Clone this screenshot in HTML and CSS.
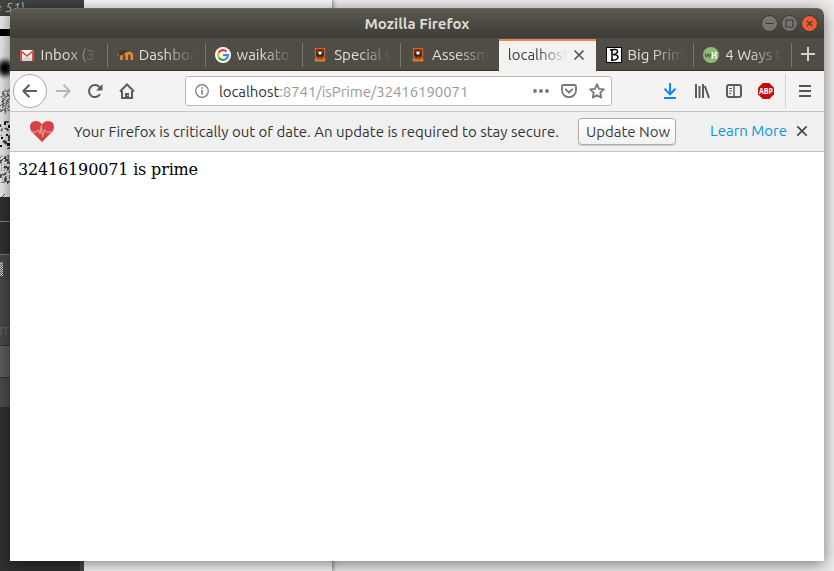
FILE: index.html
```html
<!DOCTYPE html>
<html lang="en">
<head>
<meta charset="utf-8">
<title>Mozilla Firefox</title>
<link rel="stylesheet" href="styles.css">
</head>
<body>
<div class="desktop">
  <div class="paper"></div>
  <div class="dark-app">
    <div class="dark-title">× 51)</div>
    <svg class="noise" width="10" height="181" viewBox="0 16 10 181">
      <defs>
        <filter id="soft" x="-1" y="-1" width="3" height="3"><feGaussianBlur stdDeviation="2.5"/></filter>
        <filter id="grain" x="0" y="0" width="1" height="1"><feTurbulence type="fractalNoise" baseFrequency=".42" numOctaves="1" seed="4"/><feColorMatrix values="0 0 0 0 .07 0 0 0 0 .07 0 0 0 0 .07 9 0 0 0 -4.3"/></filter>
        <filter id="spots" x="0" y="0" width="1" height="1"><feTurbulence type="fractalNoise" baseFrequency=".25" numOctaves="1" seed="7"/><feColorMatrix values="0 0 0 0 .05 0 0 0 0 .05 0 0 0 0 .05 12 0 0 0 -6.800"/></filter>
      </defs>
      <path d="M0 16h10v181H0z" fill="#e9e9e9"/>
      <path d="M0 29h10v7H0z" fill="#000"/>
      <ellipse cx="5" cy="68" rx="7" ry="8" filter="url(#soft)"/>
      <path d="M5 89v3M7 91l3-2M2 93l3 2M7 95l3 1M1 97l4-2M3 99l6-4M1 102l5-3M6 103l4-5M0 106l5-3M2 108l7-6M1 112l5-5M7 109l3-3M5 114l1-4" stroke="#444" stroke-width=".8"/>
      <rect x="0" y="91" width="10" height="21" filter="url(#grain)" opacity=".6"/>
      <rect x="0" y="121" width="10" height="28" filter="url(#spots)"/>
      <path d="M4 122h2v3H4zM8 125h2v3H8zM6 134h2v2H6zM1 137h2v2H1zM7 143h3v3H7zM0 145h2v2H0z" fill="#111"/>
      <rect x="0" y="155" width="10" height="29" filter="url(#grain)"/>
      <path d="M2 197l3-3" stroke="#555"/>
    </svg>
    <div class="panel panel-a"></div>
    <div class="panel panel-b"></div>
    <div class="panel panel-c"><i class="checker"></i><span>rn</span></div>
    <div class="panel panel-d"></div>
    <div class="panel panel-e"></div>
  </div>

  <main class="window">
    <header class="titlebar">
      <h1>Mozilla Firefox</h1>
      <div class="controls">
        <svg width="17" height="17" viewBox="0 0 17 17"><circle cx="8.5" cy="8.5" r="8" class="ctl"/><path d="M4.5 8.5h8" class="ctl-mark"/></svg>
        <svg width="17" height="17" viewBox="0 0 17 17"><circle cx="8.5" cy="8.5" r="8" class="ctl"/><path d="M5 5h7v7H5z" class="ctl-mark"/></svg>
        <svg width="17" height="17" viewBox="0 0 17 17"><circle cx="8.5" cy="8.5" r="8" class="ctl-close"/><path d="M5.8 5.8l5.4 5.4M11.2 5.8l-5.4 5.4" class="ctl-mark"/></svg>
      </div>
    </header>

    <nav class="tabs">
      <div class="tab">
        <svg width="16" height="16" viewBox="0 0 16 16"><path d="M1 3h14v11H1z" fill="#f2f2f2"/><path d="M1 14l5-5 2 2 2-2 5 5z" fill="#d5d5d5"/><path d="M1 14V3h1l6 5 6-5h1v11h-2V6L8 10 3 6v8z" fill="#dc4b40"/></svg>
        <span class="label">Inbox (3,</span>
      </div>
      <div class="tab">
        <svg width="16" height="16" viewBox="0 0 16 16"><path d="M4.500 13V9Q4.500 6 7 6T9.700 9V13M9.700 9Q9.700 6 12.200 6T14.900 9V13" fill="none" stroke="#f08a28" stroke-width="2.500"/><path d="M1 6l5-3 4 1-3 3-3 1.500z" fill="#3d3934"/><path d="M1 6v4" stroke="#a66635"/></svg>
        <span class="label">Dashboa</span>
      </div>
      <div class="tab">
        <svg width="16" height="16" viewBox="0 0 16 16"><circle cx="8" cy="8" r="8" fill="#fff"/><g fill="none" stroke-width="2.200"><path d="M11.600 4.600A5 5 0 0 0 3.600 5.700" stroke="#ea4335"/><path d="M3.600 5.700A5 5 0 0 0 3.700 10.500" stroke="#fbbc05"/><path d="M3.700 10.500A5 5 0 0 0 11.200 11.800" stroke="#34a853"/><path d="M11.200 11.800A5 5 0 0 0 13 8.200H8" stroke="#4285f4"/></g></svg>
        <span class="label">waikato</span>
      </div>
      <div class="tab">
        <svg width="16" height="16" viewBox="0 0 16 16"><path d="M3.500 1.700h9v7Q11.500 11 8 12 4.500 11 3.500 8.700z" fill="#3a1c10" stroke="#c9622d" stroke-width="1.500"/><path d="M5 3.500h2v2H5zM9 3.500h2v2H9zM7 9h2v2H7z" fill="#8d3c1f"/><path d="M6.500 4.500h3v3h-3z" fill="#f5efe8"/><path d="M2.500 10.500l3 2h5l3-2-.5 4H3z" fill="#d8862d"/><path d="M5 11.500h6" stroke="#d03b2a"/></svg>
        <span class="label">Special C</span>
      </div>
      <div class="tab">
        <svg width="16" height="16" viewBox="0 0 16 16"><path d="M3.500 1.700h9v7Q11.500 11 8 12 4.500 11 3.500 8.700z" fill="#3a1c10" stroke="#c9622d" stroke-width="1.500"/><path d="M5 3.500h2v2H5zM9 3.500h2v2H9zM7 9h2v2H7z" fill="#8d3c1f"/><path d="M6.500 4.500h3v3h-3z" fill="#f5efe8"/><path d="M2.500 10.500l3 2h5l3-2-.5 4H3z" fill="#d8862d"/><path d="M5 11.500h6" stroke="#d03b2a"/></svg>
        <span class="label">Assessm</span>
      </div>
      <div class="tab active">
        <span class="label">localhost</span>
        <svg width="12" height="12" viewBox="0 0 12 12"><path d="M1.500 1.500l9 9M10.500 1.500l-9 9" stroke="#555" stroke-width="1.700"/></svg>
      </div>
      <div class="tab">
        <svg width="16" height="16" viewBox="0 0 16 16"><path d="M.5.5h15v15H.5z" fill="#fff" stroke="#000"/><path d="M6 3v10.500M4 3q7-1.500 7.500 1T7 7.500q5 0 5 2.800T5 13.500" stroke="#000" stroke-width="1.500" fill="none"/></svg>
        <span class="label">Big Prim</span>
      </div>
      <div class="tab">
        <svg width="16" height="16" viewBox="0 0 16 16"><circle cx="8" cy="8" r="8" fill="#93b874"/><path d="M2 6.500l1.200 3.500L5 7l1.300 3L7.600 6.500" stroke="#4f6b40" stroke-width="1.300" fill="none"/><path d="M9.500 5.500v5.500M12.800 5.500v5.500M9 8.200h4M8.500 5.500h2M12 5.500h2M8.500 11h2M12 11h2" stroke="#fff" stroke-width="1.200"/></svg>
        <span class="label">4 Ways t</span>
      </div>
      <div class="new-tab"><svg width="14" height="14" viewBox="0 0 14 14"><path d="M7 0v14M0 7h14" stroke="#d5d2c9" stroke-width="2"/></svg></div>
    </nav>

    <div class="toolbar">
      <div class="back"><svg width="16" height="16" viewBox="0 0 16 16"><path d="M15 8H1.500M7.500 1.700L1.300 8l6.200 6.300" class="stroke"/></svg></div>
      <svg class="forward" width="16" height="16" viewBox="0 0 16 16"><path d="M1 8h13.500M8.500 1.700L14.700 8l-6.200 6.300" class="stroke pale"/></svg>
      <svg class="reload" width="16" height="16" viewBox="0 0 16 16"><path d="M13 11.300A6 6 0 1 1 12.800 4.500" class="stroke"/><path d="M15.500 1v6.500H9z" fill="#5c5c5a"/></svg>
      <svg class="home" width="16" height="16" viewBox="0 0 16 16"><path d="M1 8.500L8 1.500l7 7M3 8v7h10V8" class="stroke"/><path d="M6 15v-5h4v5" fill="#5c5c5a"/><path d="M8.300 12.500h1" stroke="#fff"/></svg>
      <div class="urlbar">
        <svg width="14" height="14" viewBox="0 0 14 14"><circle cx="7" cy="7" r="6.300" fill="none" stroke="#777" stroke-width="1.200"/><path d="M7 6v4.500M7 3.300v1.500" stroke="#777" stroke-width="1.600"/></svg>
        <span class="url"><b>localhost</b>:8741/isPrime/32416190071</span>
        <svg width="16" height="16" viewBox="0 0 16 16" fill="#777"><circle cx="2" cy="8" r="1.900"/><circle cx="8" cy="8" r="1.900"/><circle cx="14" cy="8" r="1.900"/></svg>
        <svg class="pocket" width="16" height="16" viewBox="0 0 16 16"><path d="M2.500 2h11q1.500 0 1.500 1.500V7.500a7 6.700 0 0 1-14 0V3.500Q1 2 2.500 2zM4.700 6.300L8 9.500l3.300-3.200" class="stroke grey" stroke-linecap="round" stroke-linejoin="round"/></svg>
        <svg class="star" width="16" height="16" viewBox="0 0 16 16"><path d="M8 1.300l2 4.500 4.900.5-3.600 3.400 1 4.900L8 12.200l-4.300 2.400 1-4.900L1.100 6.300 6 5.800z" class="stroke grey" stroke-linejoin="round"/></svg>
      </div>
      <div class="tools">
        <svg width="16" height="16" viewBox="0 0 16 16"><path d="M7 0v11M1.500 5.800L7 11.300l5.500-5.500M1 15h12" transform="translate(1 0)" fill="none" stroke="#0a84ff" stroke-width="2"/></svg>
        <svg width="16" height="16" viewBox="0 0 16 16"><path d="M2 1v14M5.500 3v12M9 1v14M10.800 3L15 14.800" class="stroke"/></svg>
        <svg width="16" height="16" viewBox="0 0 16 16"><rect x="1" y="2" width="14" height="12" rx="2" class="stroke"/><path d="M8 2v12" stroke="#5c5c5a" stroke-width="1.500"/><path d="M3 5.500h3M3 8h3M3 10.500h2" stroke="#5c5c5a"/></svg>
        <svg class="abp" width="16" height="16" viewBox="0 0 16 16"><path d="M4.700 0h6.600L16 4.700v6.600L11.300 16H4.700L0 11.300V4.700z" fill="#c60d0d"/><text x="1" y="10.900" textLength="14" lengthAdjust="spacingAndGlyphs">ABP</text></svg>
      </div>
      <div class="menu"><svg width="12" height="12" viewBox="0 0 12 12"><path d="M0 1h12M0 6h12M0 11h12" stroke="#555" stroke-width="2"/></svg></div>
    </div>

    <div class="notice">
      <svg class="heart" width="24" height="21" viewBox="0 0 24 21"><path d="M12 21L2 11Q0 9 0 6 0 0 6 0q4 0 6 3.500Q14 0 18 0q6 0 6 6 0 3-2 5z" fill="#d74345"/><path d="M1 11h6l1.500-2.500L10 13l1.500-9 1 12 2-7.500 1.500 2.500h7" fill="none" stroke="#f2a3a3"/></svg>
      <span class="message">Your Firefox is critically out of date. An update is required to stay secure.</span>
      <button>Update Now</button>
      <a class="learn">Learn More</a>
      <svg class="dismiss" width="12" height="12" viewBox="0 0 12 12"><path d="M1.300 1.300l9.400 9.400M10.700 1.300l-9.400 9.400" stroke="#4a4a4a" stroke-width="1.800"/></svg>
    </div>
    <section class="page">32416190071 is prime</section>
  </main>
</div>
</body>
</html>
```

FILE: styles.css
```css
* { box-sizing: border-box; }
body { margin: 0; overflow: hidden; font: 15px "Ubuntu", "Open Sans", sans-serif; color: #333; }
svg { display: block; flex: none; }
.desktop { position: relative; width: 834px; height: 571px; overflow: hidden; background: #efedeb; }
.paper { position: absolute; left: 84px; top: 0; width: 248px; height: 571px; background: #f8f8f8; box-shadow: 1px 0 4px #777; }
.dark-app { position: absolute; left: 0; top: 0; width: 84px; height: 571px; background: #303030; border-right: 4px solid #484848; }
.dark-title { height: 16px; width: 84px; background: #424242; color: #bbb; font-size: 13px; font-style: italic; line-height: 14px; text-indent: -5px; white-space: nowrap; }
.panel { width: 10px; overflow: hidden; }
.panel-a { height: 25px; background: #303030; border-bottom: 1px solid #888; }
.panel-b { height: 33px; background: #303030; border-bottom: 1px solid #777; }
.panel-c { height: 91px; background: #484848; color: #606970; border-bottom: 1px solid #333; }
.panel-c span { display: block; margin-top: 45px; line-height: 18px; font-size: 14px; margin-left: -1px; }
.checker { display: block; width: 3px; height: 14px; margin-top: 7px; background: repeating-conic-gradient(#ddd 0 25%, #555 0 50%) 0 0 / 2px 2px; }
.panel-d { height: 32px; background: #5d5d5d; border-bottom: 1px solid #333; }
.panel-e { height: 29px; background: #4b4b4b; }

.window { position: absolute; left: 10px; top: 8px; width: 814px; height: 553px; display: flex; flex-direction: column; background: #fff; border-radius: 7px 7px 0 0; box-shadow: 0 3px 16px rgba(0,0,0,.5); overflow: hidden; }
.titlebar { height: 30px; flex: none; display: grid; grid-template-columns: 1fr auto 1fr; align-items: center; background: linear-gradient(#5b584f, #3d3c37); border-top: 1px solid #68655b; }
h1 { grid-column: 2; margin: 0; font-size: 15px; line-height: 28px; font-weight: 700; color: #dfdbd2; }
.controls { display: flex; justify-content: flex-end; gap: 3px; padding-right: 6px; margin-top: -1px; }
.ctl { fill: #77756d; stroke: #393833; }
.ctl-close { fill: #ec5b32; stroke: #393833; }
.ctl-mark { fill: none; stroke: #3a3934; stroke-width: 1.2; }

.tabs { height: 33px; flex: none; display: flex; background: #504d46; border-bottom: 1px solid #34322e; }
.tab { position: relative; width: 97.75px; flex: none; display: flex; align-items: center; gap: 6px; padding-left: 9px; padding-top: 1px; color: #e4e0d6; }
.tab:first-child { padding-left: 8.6px; }
.tab::after { content: ""; position: absolute; right: 0; top: 5px; width: 1px; height: 24px; background: #78756d; }
.tab:nth-child(5)::after, .active::after { display: none; }
.label { width: 60px; overflow: hidden; white-space: nowrap; line-height: 24px; -webkit-mask-image: linear-gradient(90deg, #000 40%, transparent 94%); mask-image: linear-gradient(90deg, #000 40%, transparent 94%); }
.active { background: #f4f2f1; color: #3c3c3c; border-top: 2px solid #f08354; height: 32px; margin: 1px .75px 0 0; gap: 6px; padding: 0 0 3px 9px; width: 97px; }
.active .label { width: 59px; -webkit-mask-image: linear-gradient(90deg, #000 50%, transparent); mask-image: linear-gradient(90deg, #000 50%, transparent); }
.new-tab { flex: 1; display: flex; align-items: center; justify-content: center; }

.toolbar { height: 41px; flex: none; display: flex; align-items: center; background: #f4f3f2; border-bottom: 1px solid #c6c6c6; }
.stroke { fill: none; stroke: #5c5c5a; stroke-width: 2; }
.pale { stroke: #b8b7b5; }
.grey { stroke: #777; stroke-width: 1.8; }
.back { width: 34px; height: 34px; margin-left: 3px; border: 1px solid #aaa; border-radius: 50%; background: #fff; display: flex; align-items: center; justify-content: center; }
.forward { margin-left: 8px; }
.reload, .home { margin-left: 16px; }
.urlbar { width: 427px; height: 30px; margin-left: 50px; padding: 0 6px 0 9px; display: flex; align-items: center; background: #fff; border: 1px solid #bbb; border-radius: 3px; }
.url { margin-left: 10px; flex: 1; white-space: nowrap; color: #999; letter-spacing: -.09px; }
.url b { font-weight: 400; color: #333; }
.pocket, .star { margin-left: 12px; }
.tools { display: flex; gap: 16px; margin-left: 50px; }
.abp text { font: 700 8px "Open Sans", sans-serif; fill: #fff; }
.menu { margin-left: 11px; height: 34px; padding-left: 13px; border-left: 1px solid #d2d2d2; display: flex; align-items: center; }

.notice { height: 40px; flex: none; display: flex; align-items: center; background: #f0f0f0; border-bottom: 1px solid #c4c4c4; white-space: nowrap; }
.heart { margin-left: 20px; }
.message { width: 487px; margin-left: 20px; }
button { width: 98px; height: 27px; margin-left: 17px; padding: 0 0 0 2px; font: inherit; color: #3c3c3c; border: 1px solid #aaa; border-radius: 4px; background: linear-gradient(#fff, #f2f2f2); box-shadow: 0 1px 1px #ccc; white-space: nowrap; }
.learn { width: 78px; margin-left: 34px; padding-bottom: 2px; color: #0996db; }
.dismiss { margin-left: 8px; margin-bottom: 2px; }
.page { flex: 1; padding: 8px; font: 16px/19px "DejaVu Serif", serif; letter-spacing: -.16px; color: #000; }
```
